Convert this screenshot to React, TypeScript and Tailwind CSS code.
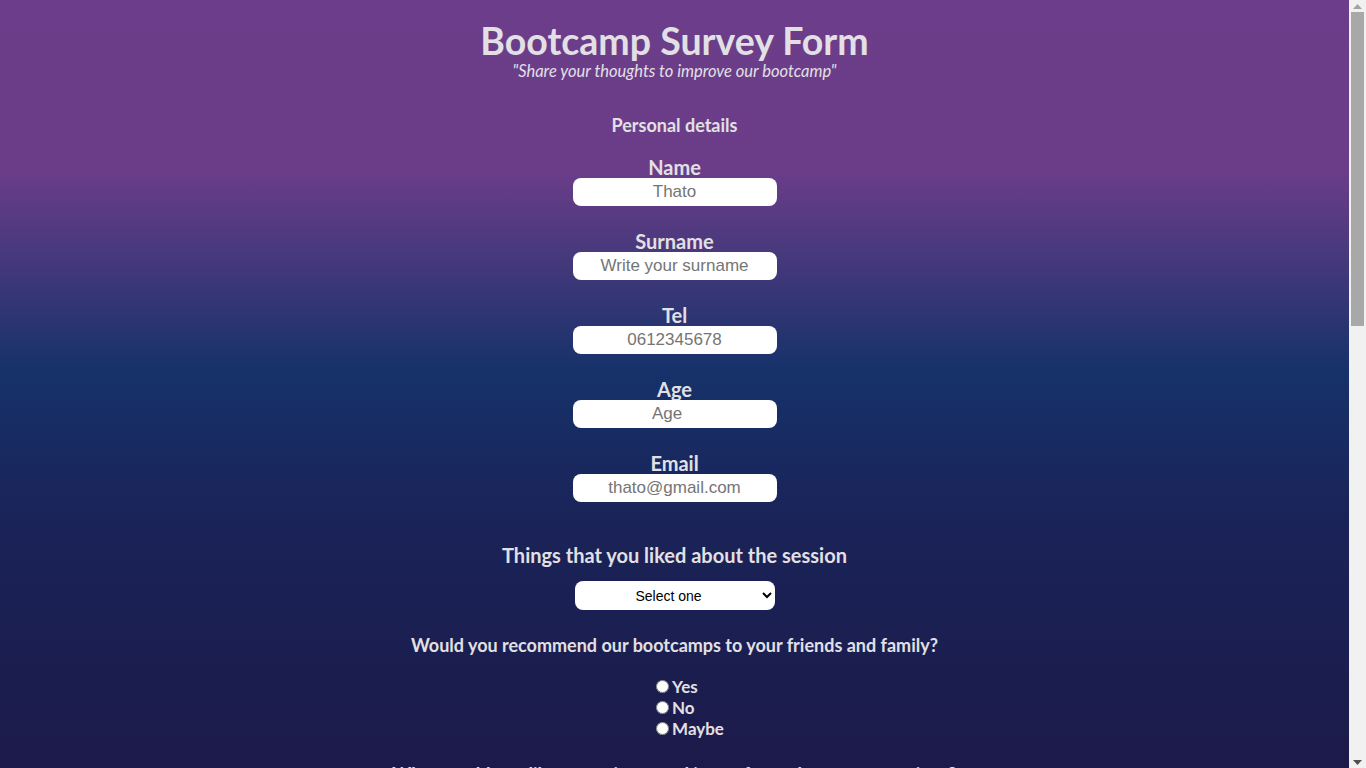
import React from "react";

const font = { fontFamily: 'Lato, "Open Sans", sans-serif' };
const arial = { fontFamily: '"Liberation Sans", Arial, sans-serif' };

function Field({ label, placeholder, type = "text" }: { label: string; placeholder: string; type?: string }) {
  return (
    <div className="flex flex-col items-center mt-[24px] first:mt-[19px]">
      <label className="text-[20px] leading-[22px] font-bold">{label}</label>
      <input
        type={type}
        placeholder={placeholder}
        className="w-[204px] h-[28px] rounded-[8px] bg-white text-center text-[17px] placeholder:text-[#757575] text-[#333] outline-none"
        style={arial}
      />
    </div>
  );
}

function Scrollbar() {
  return (
    <div className="w-[17px] h-full bg-[#f1f1f1] flex flex-col items-center shrink-0">
      <div className="h-[12px] w-full flex items-center justify-center">
        <svg width="9" height="5" viewBox="0 0 9 5"><path d="M0 5 L4.5 0 L9 5 Z" fill="#a3a3a3" /></svg>
      </div>
      <div className="w-[13px] h-[314px] bg-[#a8a8a8]" />
      <div className="flex-1" />
      <div className="h-[12px] w-full flex items-center justify-center">
        <svg width="9" height="5" viewBox="0 0 9 5"><path d="M0 0 L9 0 L4.5 5 Z" fill="#505050" /></svg>
      </div>
    </div>
  );
}

export default function App() {
  return (
    <div className="w-full h-screen flex overflow-hidden">
      <div
        className="flex-1 min-w-0 h-full overflow-hidden text-[#e2e0e4] bg-[linear-gradient(to_bottom,#6b3d8a_0px,#6b3d89_170px,#16326a_370px,#1a2358_520px,#1c1a4a_768px)]"
        style={font}
      >
        <div className="flex flex-col items-center">
          <h1 className="text-[37.5px] leading-[40px] font-bold mt-[21px]">Bootcamp Survey Form</h1>
          <p className="text-[16.5px] leading-[20px] italic">"Share your thoughts to improve our bootcamp"</p>
          <h3 className="text-[18px] leading-[24px] font-bold mt-[32px]">Personal details</h3>
          <div className="flex flex-col items-center">
            <Field label="Name" placeholder="Thato" />
            <Field label="Surname" placeholder="Write your surname" />
            <Field label="Tel" placeholder="0612345678" type="tel" />
            <Field label="Age" placeholder="Age" type="number" />
            <Field label="Email" placeholder="thato@gmail.com" type="email" />
          </div>
          <h3 className="text-[20px] leading-[24px] font-bold mt-[41px]">Things that you liked about the session</h3>
          <select
            className="mt-[14px] w-[200px] h-[29px] rounded-[8px] bg-white text-black text-[14px] px-[4px] [text-align-last:center] outline-none"
            style={arial}
            defaultValue=""
          >
            <option value="">Select one</option>
            <option>The content</option>
            <option>The facilitators</option>
            <option>The projects</option>
          </select>
          <h3 className="text-[18px] leading-[24px] font-bold mt-[23px]">Would you recommend our bootcamps to your friends and family?</h3>
          <div className="mt-[19px] ml-[26px] flex flex-col items-start">
            {["Yes", "No", "Maybe"].map((o) => (
              <label key={o} className="flex items-center h-[21px] text-[17px] font-bold">
                <input type="radio" name="rec" className="w-[13px] h-[13px] ml-[5px] mr-[3px]" />
                {o}
              </label>
            ))}
          </div>
          <h3 className="text-[18px] leading-[24px] font-bold mt-[23px]">What would you like to see improved in our future bootcamp sessions?</h3>
          <textarea
            className="mt-[14px] w-[300px] h-[120px] rounded-[8px] bg-white text-[16px] p-2 text-[#333] outline-none"
            placeholder="Write your suggestions here"
            style={arial}
          />
          <button className="mt-[24px] w-[120px] h-[36px] rounded-[8px] bg-white text-[#1c1a4a] font-bold text-[16px]">Submit</button>
        </div>
      </div>
      <Scrollbar />
    </div>
  );
}
